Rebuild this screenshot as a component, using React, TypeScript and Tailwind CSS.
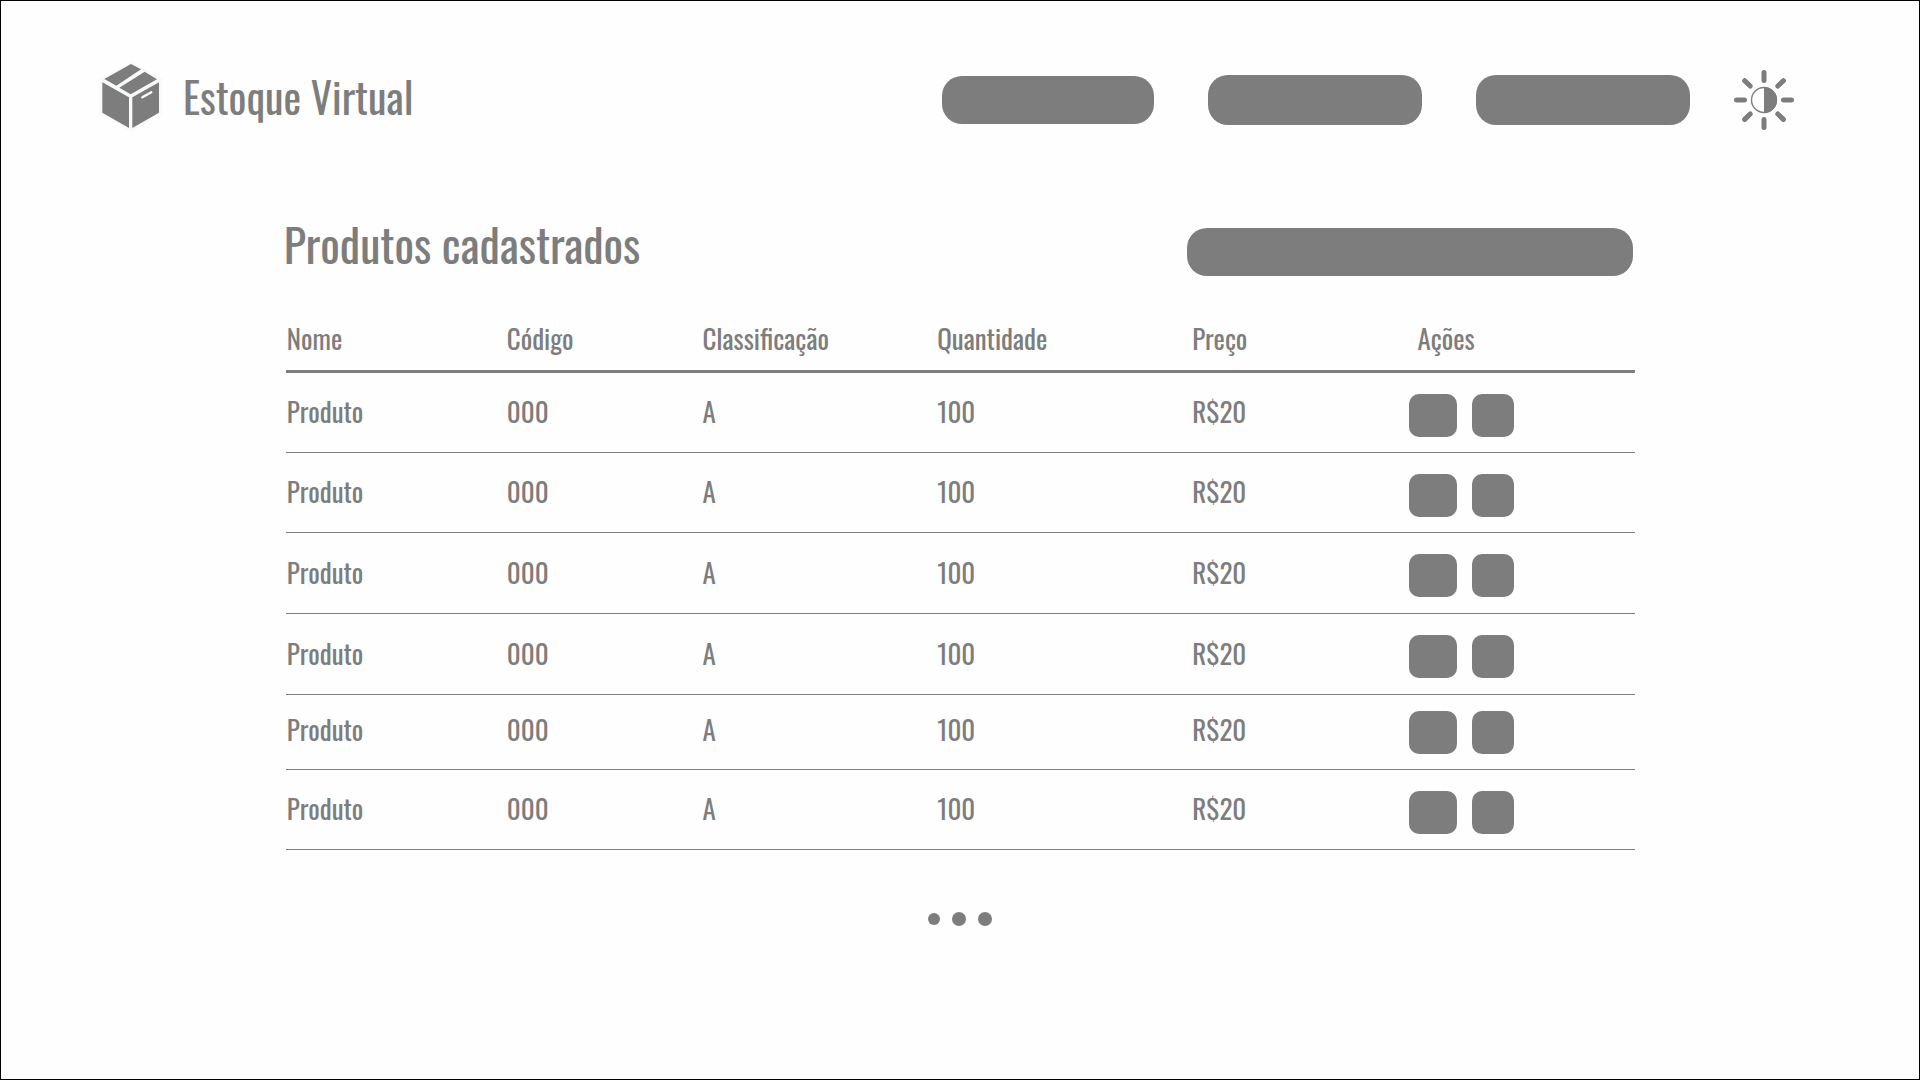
const menu = [
  { label: "Início", size: "h-12 w-[212px]" },
  { label: "Produtos", size: "h-[50px] w-[214px]" },
  { label: "Relatórios", size: "h-[50px] w-[214px]" },
];

const columns = [
  { title: "Nome", width: "w-[16.3%]" },
  { title: "Código", width: "w-[14.5%]" },
  { title: "Classificação", width: "w-[17.4%]" },
  { title: "Quantidade", width: "w-[18.9%]" },
  { title: "Preço", width: "w-[16.1%]" },
  { title: "Ações", width: "" },
];

const rows = [
  { id: 1, height: "h-[81px]", cell: "p-0 pb-0.5 pl-px" },
  { id: 2, height: "h-20", cell: "p-0 pb-0.5 pl-px" },
  { id: 3, height: "h-[81px]", cell: "p-0 pb-0.5 pl-px" },
  { id: 4, height: "h-[81px]", cell: "p-0 pb-0.5 pl-px" },
  { id: 5, height: "h-[75px]", cell: "p-0 pb-1.5 pl-px" },
  { id: 6, height: "h-20", cell: "p-0 pb-0.5 pl-px" },
];

function BoxLogo() {
  return (
    <svg viewBox="24 30 198 219" className="h-[73px] w-[66px]" fill="#7d7d7d" aria-hidden="true">
      <path d="M123 33 L218 86 V192 L123 246 L27 192 V86 Z" fill="#f9fafb" />
      <path d="M123 42 L153 58 L79 107 L43 87 Z" />
      <path d="M164 65 L201 88 L122 133 L88 113 Z" />
      <path d="M37 97 L117 142 V234 L37 188 Z" />
      <path d="M127 142 L207 97 V188 L127 234 Z" />
      <path d="M157 142 L184 127" stroke="#fdfdfd" strokeWidth="7" strokeLinecap="round" />
    </svg>
  );
}

function SunIcon() {
  return (
    <svg viewBox="0 0 60 60" className="size-[60px]" fill="none" stroke="#7d7d7d" aria-hidden="true">
      <circle cx="30" cy="30" r="12.5" strokeWidth="1.4" />
      <path d="M30 17 A13 13 0 0 1 30 43 Z" fill="#7d7d7d" stroke="none" />
      <path
        d="M30 2.5V10.5M30 49.5V57.5M2.5 30H10.5M49.5 30H57.5M10.7 10.7L16.2 16M43.8 44L49.4 49.4M49.4 10.7L43.8 16M16.2 44L10.7 49.4"
        strokeWidth="5"
        strokeLinecap="round"
      />
    </svg>
  );
}

export default function App() {
  return (
    <div className="min-h-screen border border-black bg-[#fefefe] font-['Oswald','Roboto_Condensed',sans-serif] font-normal text-[#7d7d7d]">
      <header className="flex items-center justify-between pt-[59px] pr-[125px] pl-[97px]">
        <a href="#" className="flex items-center gap-[19px]">
          <BoxLogo />
          <span className="pb-0.5 text-[42px] leading-[70px]">Estoque Virtual</span>
        </a>
        <nav className="flex items-center gap-[54px] pt-1.5">
          {menu.map((item) => (
            <button key={item.label} type="button" aria-label={item.label} className={`rounded-[20px] bg-[#7d7d7d] ${item.size}`} />
          ))}
          <button type="button" aria-label="Alternar tema" className="-ml-2.5">
            <SunIcon />
          </button>
        </nav>
      </header>

      <main className="mx-auto w-[70.4%] pt-[75px] pl-px">
        <div className="flex items-center justify-between pr-0.5">
          <h1 className="-ml-0.5 pb-4 text-[46px] leading-[71px]">Produtos cadastrados</h1>
          <input type="search" aria-label="Pesquisar produtos" className="h-12 w-[446px] rounded-[20px] bg-[#7d7d7d] px-5 text-white outline-none" />
        </div>

        <table className="mt-3 w-full table-fixed border-collapse text-left text-[27px] leading-10">
          <thead>
            <tr className="h-16 border-b-3 border-[#7d7d7d]">
              {columns.map((column) => (
                <th key={column.title} scope="col" className={`p-0 pl-px font-normal last:pl-[9px] ${column.width}`}>
                  {column.title}
                </th>
              ))}
            </tr>
          </thead>
          <tbody>
            {rows.map((row) => (
              <tr key={row.id} className={`border-b border-[#7d7d7d] ${row.height}`}>
                <td className={row.cell}>Produto</td>
                <td className={row.cell}>000</td>
                <td className={row.cell}>A</td>
                <td className={row.cell}>100</td>
                <td className={row.cell}>R$20</td>
                <td className={row.cell}>
                  <div className="flex gap-[15px] pt-2">
                    <button type="button" aria-label="Editar produto" className="h-[43px] w-12 rounded-[10px] bg-[#7d7d7d]" />
                    <button type="button" aria-label="Excluir produto" className="h-[43px] w-[42px] rounded-[10px] bg-[#7d7d7d]" />
                  </div>
                </td>
              </tr>
            ))}
          </tbody>
        </table>

        <nav aria-label="Páginas" className="mt-[62px] flex items-center justify-center gap-3">
          <button type="button" aria-label="Página 1" className="size-3 rounded-full bg-[#7d7d7d]" />
          <button type="button" aria-label="Página 2" className="size-[14px] rounded-full bg-[#7d7d7d]" />
          <button type="button" aria-label="Página 3" className="size-[14px] rounded-full bg-[#7d7d7d]" />
        </nav>
      </main>
    </div>
  );
}
